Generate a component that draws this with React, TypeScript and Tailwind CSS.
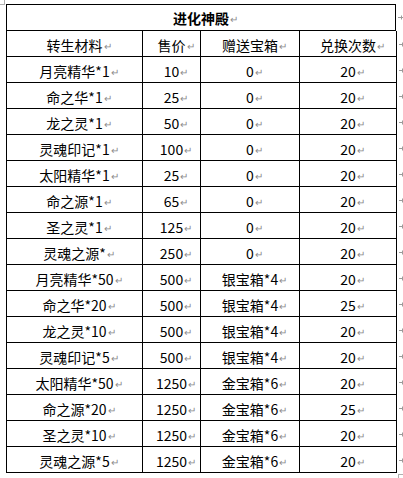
import React from "react"

const rows: [string, string, string, string][] = [
  ["月亮精华*1", "10", "0", "20"],
  ["命之华*1", "25", "0", "20"],
  ["龙之灵*1", "50", "0", "20"],
  ["灵魂印记*1", "100", "0", "20"],
  ["太阳精华*1", "25", "0", "20"],
  ["命之源*1", "65", "0", "20"],
  ["圣之灵*1", "125", "0", "20"],
  ["灵魂之源*", "250", "0", "20"],
  ["月亮精华*50", "500", "银宝箱*4", "20"],
  ["命之华*20", "500", "银宝箱*4", "25"],
  ["龙之灵*10", "500", "银宝箱*4", "20"],
  ["灵魂印记*5", "500", "银宝箱*4", "20"],
  ["太阳精华*50", "1250", "金宝箱*6", "20"],
  ["命之源*20", "1250", "金宝箱*6", "25"],
  ["圣之灵*10", "1250", "金宝箱*6", "20"],
  ["灵魂之源*5", "1250", "金宝箱*6", "20"],
]

const widths = ["w-[136px]", "w-[58px]", "w-[99px]", "w-[97px]"]

function Para({ text, bold }: { text: string; bold?: boolean }) {
  return (
    <span className={`relative ${bold ? "font-bold" : ""}`}>
      {text}
      <span className="absolute left-full top-[3px] pl-px text-[10px] font-normal leading-none text-[#8c8c8c]">
        ↵
      </span>
    </span>
  )
}

function RowMark() {
  return (
    <svg width="5" height="7" viewBox="0 0 5 7" className="ml-[2px] shrink-0">
      <path d="M0 3.5H5M3.5 1.5V5.5" stroke="#9a9a9a" strokeWidth="1" />
    </svg>
  )
}

export default function App() {
  return (
    <div
      className="relative h-[478px] w-[403px] overflow-hidden bg-white text-[14px] text-black"
      style={{ fontFamily: '"Noto Sans CJK SC", sans-serif' }}
    >
      {/* word corner marks */}
      <div className="absolute left-0 top-0 h-[5px] w-[5px] border-b border-r border-[#b0b0b0]" />
      <div className="absolute left-[398px] top-[474px] h-[5px] w-[5px] border-l border-t border-[#b0b0b0]" />

      <div className="flex flex-col pl-[6px] pt-[4px]">
        <div className="flex items-center">
          <div className="flex h-[27px] w-[391px] items-center justify-center border border-black pt-px leading-none">
            <Para text="进化神殿" bold />
          </div>
          <RowMark />
        </div>
        <div className="flex items-center">
          <div className="flex border-l border-black">
            {["转生材料", "售价", "赠送宝箱", "兑换次数"].map((h, i) => (
              <div
                key={h}
                className={`${widths[i]} flex h-[26px] items-center justify-center border-b border-r border-black pt-[2px] leading-none`}
              >
                <Para text={h} />
              </div>
            ))}
          </div>
          <RowMark />
        </div>
        {rows.map((r, ri) => (
          <div key={ri} className="flex items-center">
            <div className="flex border-l border-black">
              {r.map((c, i) => (
                <div
                  key={i}
                  className={`${widths[i]} flex h-[26px] items-center justify-center border-b border-r border-black pt-[2px] leading-none`}
                >
                  <Para text={c} />
                </div>
              ))}
            </div>
            <RowMark />
          </div>
        ))}
      </div>
    </div>
  )
}
